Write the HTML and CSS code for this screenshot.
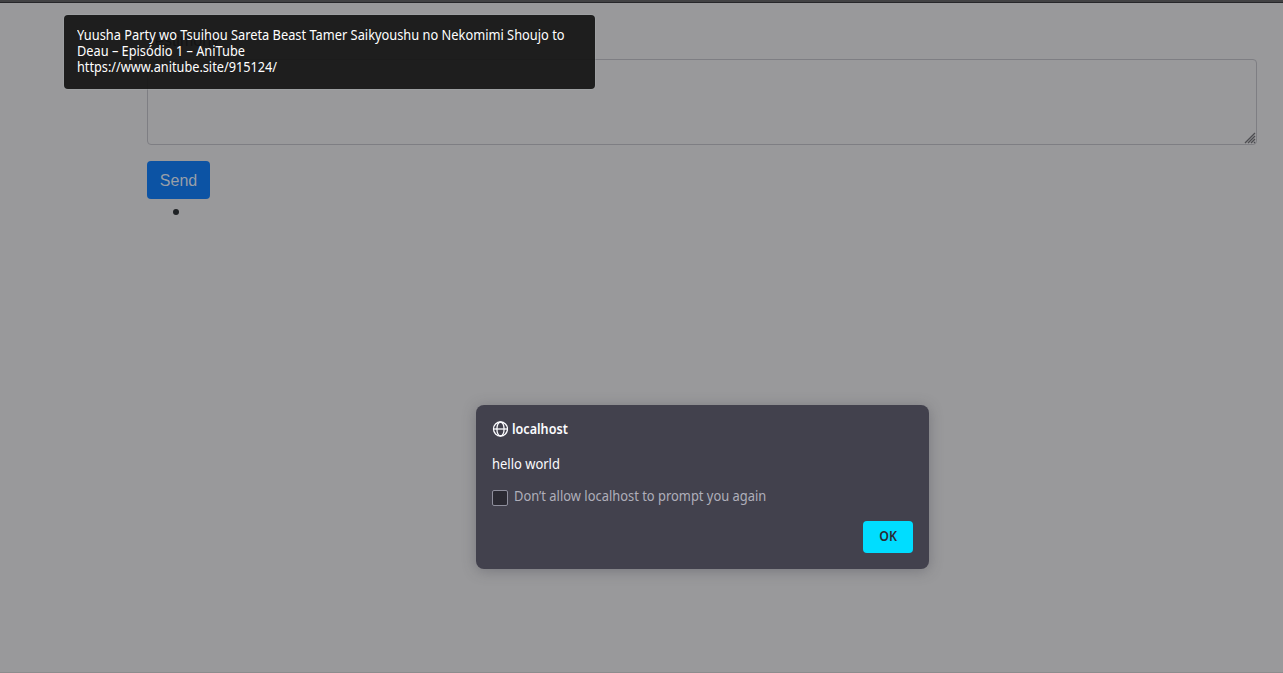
FILE: index.html
```html
<!DOCTYPE html>
<html lang="en">
<head>
<meta charset="utf-8">
<title>Testimony</title>
<link rel="stylesheet" href="styles.css">
</head>
<body>
<main class="page">
  <form class="form">
    <label class="label" for="testimony">Testimony</label>
    <div class="field">
      <textarea class="textarea" id="testimony"></textarea>
      <svg class="grip" width="12" height="12" viewBox="0 0 12 12"><path d="M1 11 11 1M4 11 11 4M7 11 11 7M10 11 11 10" stroke="#4c4c50" stroke-width="1.3" fill="none"/></svg>
    </div>
    <button class="send" type="button">Send</button>
  </form>
  <ul class="list"><li class="item"></li></ul>
</main>
<div class="tooltip">
  <div><span class="t1">Yuusha Party wo Tsuihou Sareta Beast Tamer Saikyoushu no Nekomimi Shoujo to</span></div>
  <div><span class="t2">Deau – Episódio 1 – AniTube</span></div>
  <div><span class="t3">https://www.anitube.site/915124/</span></div>
</div>
<section class="dialog" role="dialog">
  <header class="origin">
    <svg width="16" height="16" viewBox="0 0 16 16" fill="none" stroke="#fbfbfe" stroke-width="1.3"><circle cx="8.5" cy="8" r="7"/><ellipse cx="8.5" cy="8" rx="3.6" ry="7"/><path d="M1.5 8h14"/></svg>
    <span class="host">localhost</span>
  </header>
  <p class="message">hello world</p>
  <div class="check"><span class="box"></span><span class="prompt">Don’t allow localhost to prompt you again</span></div>
  <div class="actions"><button class="ok" type="button"><span class="ok-text">OK</span></button></div>
</section>
</body>
</html>
```
FILE: styles.css
```css
* { box-sizing: border-box; }
body {
  margin: 0;
  height: 673px;
  overflow: hidden;
  background: #99999a;
  font-family: "Liberation Sans", Arial, sans-serif;
}
.page {
  height: 673px;
  padding: 28px 26px 0 147px;
  border-top: 3px solid #27272a;
  border-bottom: 1px solid #8c8c8d;
  background: #99999b;
  position: relative;
}
.page::before {
  content: "";
  position: absolute;
  left: 0;
  right: 0;
  top: -3px;
  height: 2px;
  background: #424244;
}
.form { display: flex; flex-direction: column; align-items: flex-start; }
.label { height: 28px; font-size: 16px; line-height: 20px; color: #14171a; }
.field { position: relative; width: 1110px; height: 86px; margin-bottom: 16px; }
.textarea {
  display: block;
  width: 100%;
  height: 100%;
  background: transparent;
  border: 1px solid #7e7e83;
  border-radius: 4px;
  resize: none;
}
.grip { position: absolute; right: 1px; bottom: 1px; }
.send {
  width: 63px;
  height: 38px;
  padding: 2px 0 0;
  border: 0;
  border-radius: 4px;
  background: #0c53a4;
  color: #999fa8;
  font: 16px/24px "Liberation Sans", Arial, sans-serif;
}
.list { margin: 0; padding: 10px 0 0 26px; list-style: none; }
.item { width: 6px; height: 6px; border-radius: 50%; background: #1f2225; }
.tooltip {
  position: absolute;
  left: 64px;
  top: 15px;
  width: 531px;
  height: 74px;
  padding: 12px 13px;
  border-radius: 4px;
  background: rgba(20, 20, 20, .92);
  box-shadow: 0 0 0 1px rgba(170, 175, 175, .35);
  color: #fff;
  font: 14px/16px "Noto Sans", sans-serif;
  white-space: nowrap;
}
.tooltip span, .host, .message, .prompt, .ok-text { display: inline-block; transform-origin: 0 50%; }
.t1 { transform: scaleX(.916); }
.t2 { transform: scaleX(.912); }
.t3 { transform: scaleX(.908); }
.dialog {
  position: absolute;
  left: 476px;
  top: 405px;
  width: 453px;
  height: 164px;
  padding: 16px;
  border-radius: 8px;
  background: #42414d;
  box-shadow: 0 2px 14px rgba(58, 57, 68, .35);
  color: #fbfbfe;
  font: 14px/18px "Noto Sans", sans-serif;
  white-space: nowrap;
}
.origin { display: flex; align-items: center; gap: 4px; height: 16px; }
.origin svg { flex: none; }
.host { font-weight: 600; transform: scaleX(.9); }
.message { margin: 18px 0 0; height: 18px; transform: scaleX(.926); }
.check { display: flex; align-items: center; gap: 6px; height: 18px; margin-top: 14px; color: #afafba; }
.box { width: 16px; height: 16px; margin-top: 3px; border: 1px solid #8f8f9d; border-radius: 2px; background: #2b2a33; flex: none; }
.prompt { transform: scaleX(.922); }
.actions { display: flex; justify-content: flex-end; margin-top: 16px; }
.ok {
  width: 50px;
  height: 32px;
  padding: 0 0 2px;
  border: 0;
  border-radius: 4px;
  background: #00ddff;
  color: #2b2a33;
  font: 600 14px/18px "Noto Sans", sans-serif;
}
.ok-text { transform: scaleX(.88); transform-origin: 50% 50%; }
```
